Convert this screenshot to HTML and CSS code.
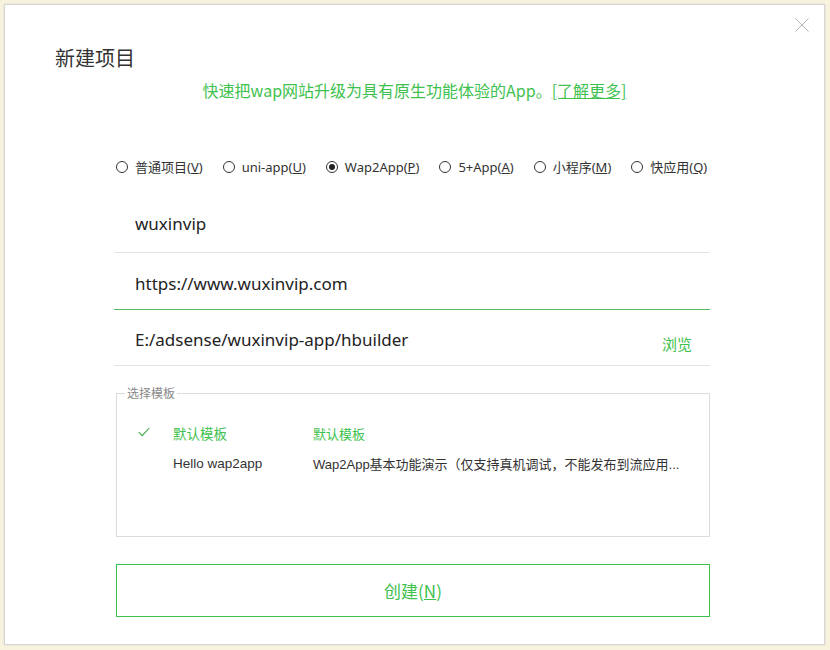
FILE: index.html
```html
<!DOCTYPE html>
<html lang="zh-CN">
<head>
<meta charset="utf-8">
<title>新建项目</title>
<link rel="stylesheet" href="styles.css">
</head>
<body>
<div class="dialog">
  <button class="close" aria-label="关闭">
    <svg width="14" height="14" viewBox="0 0 14 14"><path d="M0.5 0.5 L13.5 13.5 M13.5 0.5 L0.5 13.5" stroke="#b5b5b5" stroke-width="1" fill="none"/></svg>
  </button>
  <h1 class="title">新建项目</h1>
  <p class="subtitle">快速把wap网站升级为具有原生功能体验的App。<a class="more">[了解更多]</a></p>

  <div class="types">
    <label class="radio"><span class="dot"></span>普通项目(<u>V</u>)</label>
    <label class="radio"><span class="dot"></span>uni-app(<u>U</u>)</label>
    <label class="radio"><span class="dot on"></span>Wap2App(<u>P</u>)</label>
    <label class="radio"><span class="dot"></span>5+App(<u>A</u>)</label>
    <label class="radio"><span class="dot"></span>小程序(<u>M</u>)</label>
    <label class="radio"><span class="dot"></span>快应用(<u>Q</u>)</label>
  </div>

  <div class="form">
    <div class="field"><span class="value">wuxinvip</span></div>
    <div class="field focus"><span class="value">https://www.wuxinvip.com</span></div>
    <div class="field path"><span class="value">E:/adsense/wuxinvip-app/hbuilder</span><span class="browse">浏览</span></div>

    <fieldset class="templates">
      <legend>选择模板</legend>
      <div class="trow sel">
        <span class="check"><svg width="12" height="10" viewBox="0 0 12 10"><path d="M0.8 5.2 L4.2 8.6 L11.2 1" stroke="#3aa94a" stroke-width="1.1" fill="none"/></svg></span>
        <span class="tname">默认模板</span>
        <span class="tdesc">默认模板</span>
      </div>
      <div class="trow">
        <span class="check"></span>
        <span class="tname">Hello wap2app</span>
        <span class="tdesc">Wap2App基本功能演示（仅支持真机调试，不能发布到流应用...</span>
      </div>
    </fieldset>

    <button class="create">创建(<u>N</u>)</button>
  </div>
</div>
</body>
</html>
```
FILE: styles.css
```css
html, body {
  margin: 0;
  padding: 0;
}
body {
  width: 830px;
  height: 650px;
  background: #f8f3df;
  font-family: "Noto Sans", "Noto Sans CJK SC", sans-serif;
  color: #333;
  overflow: hidden;
}
.dialog {
  position: relative;
  margin: 4px 0 0 4px;
  width: 821px;
  height: 641px;
  box-sizing: border-box;
  background: #fff;
  border: 1px solid #d6d6d6;
  box-shadow: 0 0 2px rgba(0,0,0,0.12);
}
.close {
  position: absolute;
  top: 13px;
  right: 15px;
  padding: 0;
  border: 0;
  background: none;
  width: 14px;
  height: 14px;
}
.close svg { display: block; }
.title {
  margin: 40px 0 0 50px;
  font-size: 20px;
  font-weight: normal;
  line-height: 26px;
  color: #333;
  font-family: "Noto Sans CJK SC", sans-serif;
}
.subtitle {
  margin: 8px 0 0 0;
  text-align: center;
  font-size: 16px;
  line-height: 22px;
  color: #3ec14e;
  font-family: "Noto Sans CJK SC", sans-serif;
}
.more {
  text-decoration: underline;
  color: #3ec14e;
}
.types {
  display: flex;
  gap: 20px;
  margin: 56px 0 0 111px;
  font-size: 13px;
  line-height: 20px;
  color: #333;
}
.radio {
  display: flex;
  align-items: center;
  font-family: "Noto Sans", "Noto Sans CJK SC", sans-serif;
}
.dot {
  width: 10px;
  height: 10px;
  border: 1px solid #333;
  border-radius: 50%;
  margin-right: 7px;
  box-sizing: content-box;
  position: relative;
}
.dot.on::after {
  content: "";
  position: absolute;
  left: 2px;
  top: 2px;
  width: 6px;
  height: 6px;
  border-radius: 50%;
  background: #222;
}
.form {
  margin: 19px 0 0 109px;
  width: 596px;
}
.field {
  display: flex;
  align-items: center;
  height: 56px;
  border-bottom: 1px solid #e3e3e3;
  padding-left: 21px;
  font-size: 17px;
  color: #222;
}
.field .value { margin-top: -2px; }
.field.focus {
  border-bottom-color: #5cb860;
  padding-top: 6px;
  height: 50px;
}
.field.path {
  height: 55px;
}
.field.path .value { margin-top: 4px; }
.browse {
  margin-left: auto;
  margin-right: 18px;
  margin-top: 12px;
  font-size: 15px;
  color: #3ec14e;
  font-family: "Noto Sans CJK SC", sans-serif;
}
.templates {
  margin: 20px 0 0 2px;
  padding: 0 0 0 21px;
  width: 594px;
  height: 151px;
  box-sizing: border-box;
  border: 1px solid #dcdcdc;
  font-size: 13.5px;
}
.templates legend {
  font-size: 12px;
  color: #888;
  padding: 0 2px;
  margin-left: -13px;
  line-height: 14px;
  font-family: "Noto Sans CJK SC", sans-serif;
}
.trow {
  display: flex;
  align-items: center;
  height: 30px;
  color: #333;
}
.trow + .trow { height: 31px; }
.trow.sel {
  margin-top: 18px;
  color: #3ec14e;
}
.check {
  width: 35px;
  display: flex;
  align-items: center;
}
.check svg { display: block; margin-top: -2px; }
.tname {
  width: 140px;
  font-family: "Liberation Sans", "Noto Sans CJK SC", sans-serif;
}
.tdesc {
  font-size: 13px;
  font-family: "Liberation Sans", "Noto Sans CJK SC", sans-serif;
}
.create {
  display: block;
  margin: 27px 0 0 2px;
  width: 594px;
  height: 53px;
  border: 1px solid #3ec14e;
  background: #fff;
  color: #3ec14e;
  font-size: 17px;
  font-family: "Noto Sans CJK SC", sans-serif;
}
.create u { text-decoration: underline; }
```
